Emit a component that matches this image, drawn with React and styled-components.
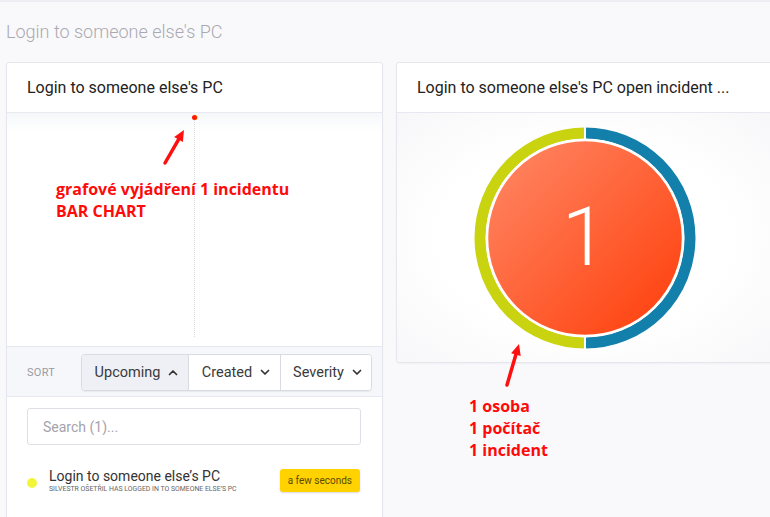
import React from "react";
import styled, { createGlobalStyle } from "styled-components";

const Global = createGlobalStyle`
  html, body { margin: 0; padding: 0; background: #f9f9fc; }
  body { font-family: Roboto, "Liberation Sans", sans-serif; }
  * { box-sizing: border-box; }
`;

const Page = styled.div`
  position: relative;
  width: 770px;
  height: 517px;
  overflow: hidden;
  border-top: 2px solid #eceef4;
  padding: 0 0 0 6px;
`;

const PageTitle = styled.h1`
  margin: 0;
  height: 60px;
  display: flex;
  align-items: center;
  padding-bottom: 1px;
  font-size: 18px;
  font-weight: 300;
  color: #a9a9b0;
`;

const Grid = styled.div`
  display: grid;
  grid-template-columns: 377px 377px;
  column-gap: 13px;
  align-items: start;
`;

const Card = styled.section`
  background: #fff;
  border: 1px solid #e6e7ee;
  border-radius: 3px;
  box-shadow: 0 1px 2px rgba(20, 30, 60, 0.04);
  overflow: hidden;
  ${(p) => (p.$tall ? "height: 480px;" : "")}
`;

const CardHeader = styled.header`
  height: 50px;
  display: flex;
  align-items: center;
  padding: 0 20px;
  border-bottom: 1px solid #e8e9f0;
  font-size: 16px;
  color: #222;
  white-space: nowrap;
`;

const BarArea = styled.div`
  position: relative;
  height: 233px;
  background: linear-gradient(#f6f7f9 0px, #fff 18px);
  display: flex;
  justify-content: center;
`;

const Axis = styled.div`
  width: 0;
  margin-top: 2px;
  height: 222px;
  border-left: 1px dotted #d8d8de;
  position: relative;
`;

const Dot = styled.div`
  position: absolute;
  top: 0;
  left: -3px;
  width: 5px;
  height: 5px;
  border-radius: 50%;
  background: #ff1a00;
  box-shadow: 1px 0 0 #f3e54a;
`;

const SortBar = styled.div`
  height: 51px;
  background: #f6f7fa;
  border-top: 1px solid #e8e9f0;
  border-bottom: 1px solid #e8e9f0;
  display: flex;
  align-items: center;
  padding: 1px 0 0 20px;
`;

const SortLabel = styled.span`
  font-size: 11px;
  color: #9a9aa2;
  letter-spacing: 0.3px;
  width: 54px;
`;

const ButtonGroup = styled.div`
  display: flex;
  height: 37px;
  border: 1px solid #d9dbe3;
  border-radius: 4px;
  overflow: hidden;
  box-shadow: 0 1px 1px rgba(0, 0, 0, 0.06);
`;

const SortButton = styled.button`
  height: 100%;
  width: ${(p) => p.$w}px;
  border: none;
  border-left: ${(p) => (p.$first ? "none" : "1px solid #d9dbe3")};
  background: ${(p) => (p.$active ? "#eef0f5" : "#fff")};
  font-family: Roboto, "Liberation Sans", sans-serif;
  font-size: 14.5px;
  color: #3a3a3a;
  display: flex;
  align-items: center;
  justify-content: center;
  gap: 8px;
  padding: 0 0 0 3px;
`;

const SearchWrap = styled.div`
  padding: 11px 21px 0 20px;
`;

const SearchInput = styled.input`
  width: 100%;
  height: 37px;
  border: 1px solid #dfe0e6;
  border-radius: 3px;
  padding: 0 15px;
  font-family: Roboto, "Liberation Sans", sans-serif;
  font-size: 14px;
  color: #333;
  &::placeholder { color: #a3a3aa; }
  outline: none;
`;

const Item = styled.div`
  display: flex;
  align-items: center;
  padding: 23px 22px 0 20px;
`;

const StatusDot = styled.span`
  width: 10px;
  height: 10px;
  border-radius: 50%;
  background: #f2f63a;
  margin: 5px 12px 0 0;
  flex: none;
`;

const ItemText = styled.div`
  flex: 1;
  display: flex;
  flex-direction: column;
`;

const ItemTitle = styled.span`
  font-size: 14px;
  color: #333;
  line-height: 16px;
`;

const ItemSub = styled.span`
  font-size: 6.9px;
  color: #666;
  text-transform: uppercase;
  line-height: 8px;
  margin-top: 1px;
`;

const Badge = styled.span`
  background: #ffd200;
  border-radius: 3px;
  height: 23px;
  padding: 0 8px;
  display: flex;
  align-items: center;
  font-size: 10px;
  color: #5a4a00;
  box-shadow: 0 1px 2px rgba(0, 0, 0, 0.15);
  margin-top: 0;
`;

const DonutArea = styled.div`
  height: 249px;
  display: flex;
  align-items: center;
  justify-content: center;
  background: radial-gradient(ellipse at center, #fff 55%, #f7f7f9 100%);
`;

const Donut = styled.div`
  position: relative;
  width: 222px;
  height: 222px;
`;

const Count = styled.span`
  position: absolute;
  inset: 0;
  display: flex;
  align-items: center;
  justify-content: center;
  font-family: Roboto, "Open Sans", sans-serif;
  font-weight: 300;
  font-size: 82px;
  color: #fff;
  padding-bottom: 1px;
`;

const Note = styled.div`
  position: absolute;
  left: ${(p) => p.$x}px;
  top: ${(p) => p.$y}px;
  font-family: "Open Sans", "Noto Sans", sans-serif;
  font-weight: 700;
  font-size: 16px;
  line-height: 22px;
  color: #ff0a0a;
  white-space: nowrap;
`;

const ArrowSvg = styled.svg`
  position: absolute;
  left: 0;
  top: 0;
  overflow: visible;
`;

const Chevron = ({ up }) => (
  <svg width="10" height="7" viewBox="0 0 10 7">
    <path
      d={up ? "M1.5 5.5 L5 2 L8.5 5.5" : "M1.5 1.5 L5 5 L8.5 1.5"}
      fill="none"
      stroke="#333"
      strokeWidth="1.7"
      strokeLinecap="round"
      strokeLinejoin="round"
    />
  </svg>
);

const Arrow = ({ x1, y1, x2, y2 }) => {
  const ang = Math.atan2(y2 - y1, x2 - x1);
  const len = 11;
  const w = 5;
  const bx = x2 - Math.cos(ang) * len;
  const by = y2 - Math.sin(ang) * len;
  const px = -Math.sin(ang) * w;
  const py = Math.cos(ang) * w;
  return (
    <ArrowSvg width="1" height="1">
      <line x1={x1} y1={y1} x2={bx} y2={by} stroke="#ff1010" strokeWidth="3.5" strokeLinecap="round" />
      <polygon points={`${x2},${y2} ${bx + px},${by + py} ${bx - px},${by - py}`} fill="#ff1010" />
    </ArrowSvg>
  );
};

export default function App() {
  const r = 105;
  const c = 111;
  return (
    <Page>
      <Global />
      <PageTitle>Login to someone else's PC</PageTitle>
      <Grid>
        <Card $tall>
          <CardHeader>Login to someone else's PC</CardHeader>
          <BarArea>
            <Axis>
              <Dot />
            </Axis>
          </BarArea>
          <SortBar>
            <SortLabel>SORT</SortLabel>
            <ButtonGroup>
              <SortButton $first $active $w={106}>
                Upcoming <Chevron up />
              </SortButton>
              <SortButton $w={92}>
                Created <Chevron />
              </SortButton>
              <SortButton $w={91}>
                Severity <Chevron />
              </SortButton>
            </ButtonGroup>
          </SortBar>
          <SearchWrap>
            <SearchInput placeholder="Search (1)..." />
          </SearchWrap>
          <Item>
            <StatusDot />
            <ItemText>
              <ItemTitle>Login to someone else’s PC</ItemTitle>
              <ItemSub>Silvestr Ošetřil has logged in to someone else’s PC</ItemSub>
            </ItemText>
            <Badge>a few seconds</Badge>
          </Item>
        </Card>
        <Card>
          <CardHeader>Login to someone else's PC open incident ...</CardHeader>
          <DonutArea>
            <Donut>
              <svg width="222" height="222" viewBox="0 0 222 222">
                <defs>
                  <linearGradient id="redg" x1="0" y1="0" x2="1" y2="1">
                    <stop offset="0" stopColor="#ff8a68" />
                    <stop offset="1" stopColor="#ff3c08" />
                  </linearGradient>
                </defs>
                <path
                  d={`M ${c} ${c - r} A ${r} ${r} 0 0 0 ${c} ${c + r}`}
                  fill="none"
                  stroke="#c9d30f"
                  strokeWidth="11"
                />
                <path
                  d={`M ${c} ${c - r} A ${r} ${r} 0 0 1 ${c} ${c + r}`}
                  fill="none"
                  stroke="#137fab"
                  strokeWidth="11"
                />
                <line x1={c} y1="0" x2={c} y2="222" stroke="#fff" strokeWidth="2" />
                <circle cx={c} cy={c} r="98" fill="url(#redg)" stroke="#fff" strokeWidth="2.5" />
              </svg>
              <Count>1</Count>
            </Donut>
          </DonutArea>
        </Card>
      </Grid>
      <Arrow x1={165} y1={161} x2={184} y2={128} />
      <Note $x={56} $y={176}>
        grafové vyjádření 1 incidentu
        <br />
        BAR CHART
      </Note>
      <Arrow x1={507} y1={383} x2={519} y2={342} />
      <Note $x={469} $y={393}>
        1 osoba
        <br />
        1 počítač
        <br />
        1 incident
      </Note>
    </Page>
  );
}
